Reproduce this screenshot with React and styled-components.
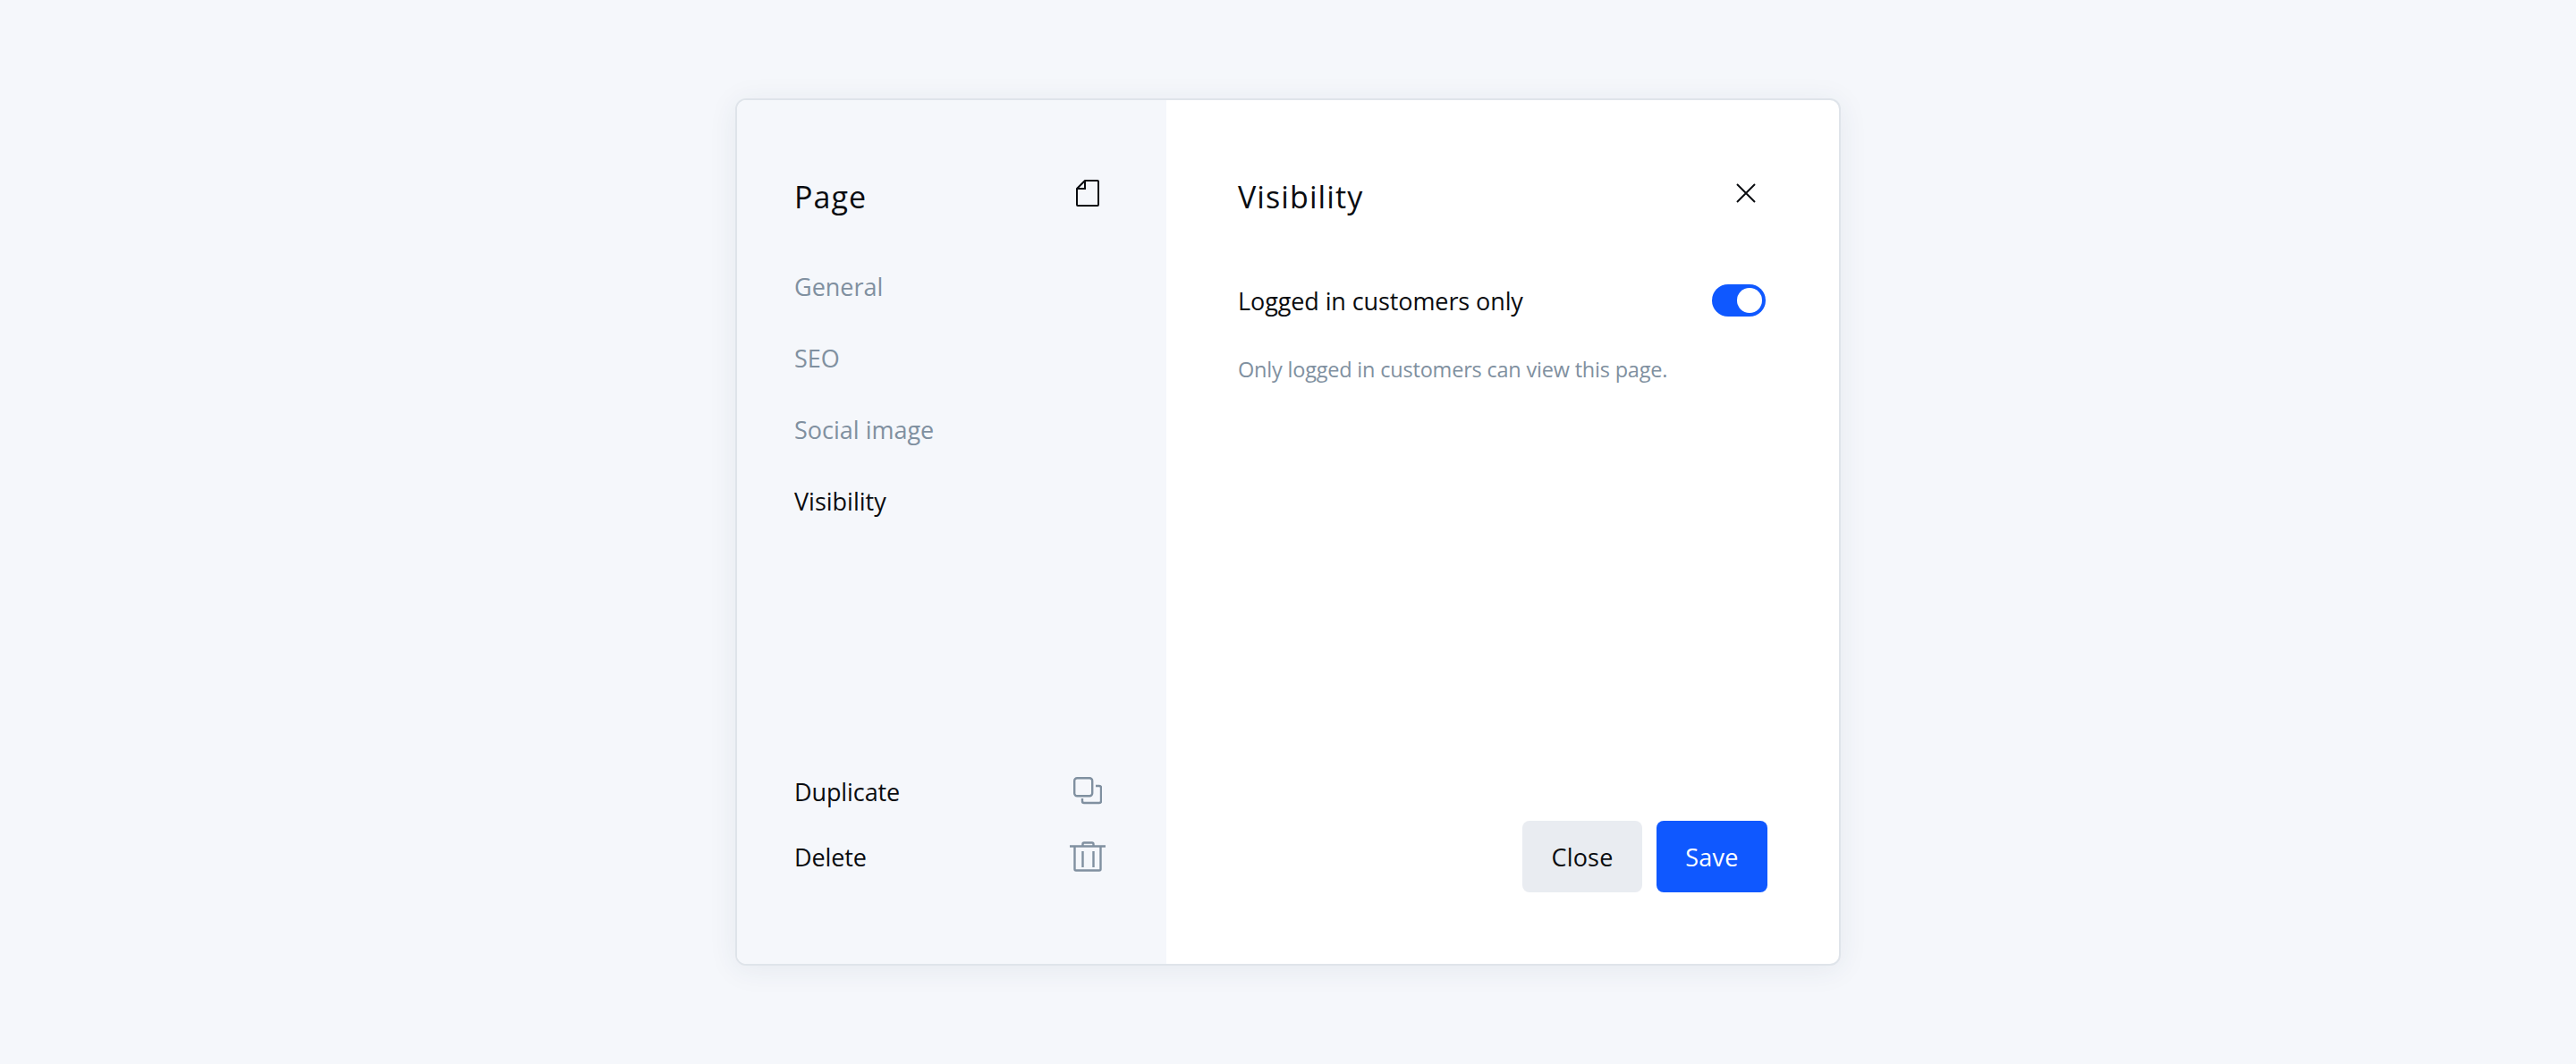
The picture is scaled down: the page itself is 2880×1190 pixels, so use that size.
import React from 'react'
import styled, { createGlobalStyle } from 'styled-components'

const GlobalStyle = createGlobalStyle`
  html, body {
    margin: 0;
    height: 100%;
    background: #f5f7fb;
  }
  #root {
    height: 100%;
  }
`

const Page = styled.div`
  height: 1190px;
  display: flex;
  align-items: center;
  justify-content: center;
  font-family: "Open Sans", sans-serif;
  color: #0a0c10;
`

const Card = styled.div`
  width: 1236px;
  height: 970px;
  box-sizing: border-box;
  display: flex;
  background: #fff;
  border: 2px solid #dfe4ea;
  border-radius: 12px;
  overflow: hidden;
  box-shadow: 0 4px 32px rgba(40, 60, 90, 0.08);
`

const Sidebar = styled.aside`
  width: 480px;
  box-sizing: border-box;
  display: flex;
  flex-direction: column;
  padding: 88px 68px 83px 64px;
  background: #f5f7fb;
`

const Main = styled.main`
  flex: 1;
  display: flex;
  flex-direction: column;
  padding: 88px 80px 80px;
`

const Header = styled.div`
  height: 40px;
  display: flex;
  justify-content: space-between;
  align-items: center;
`

const Title = styled.h2`
  margin: 0;
  font-size: 34px;
  font-weight: 500;
  line-height: 40px;
  letter-spacing: 1.1px;
`

const IconSlot = styled.span`
  width: 40px;
  height: ${(p) => p.$height || 32}px;
  display: flex;
  align-items: center;
  justify-content: center;
  align-self: flex-start;
  margin-right: ${(p) => p.$right || 0}px;
  color: ${(p) => (p.$muted ? '#8090a0' : '#0a0c10')};
`

const Nav = styled.nav`
  margin-top: 40px;
  display: flex;
  flex-direction: column;
`

const NavItem = styled.a`
  height: 80px;
  display: flex;
  align-items: center;
  font-size: 27px;
  color: ${(p) => (p.$active ? '#0a0c10' : '#8090a0')};
`

const Actions = styled.div`
  margin-top: auto;
  display: flex;
  flex-direction: column;
`

const ActionRow = styled.div`
  height: 73px;
  display: flex;
  align-items: center;
  justify-content: space-between;
  font-size: 27px;
  letter-spacing: -0.1px;
`

const SettingRow = styled.div`
  height: 40px;
  margin-top: 76px;
  display: flex;
  align-items: center;
  justify-content: space-between;
  font-size: 27px;
  letter-spacing: -0.1px;
`

const Toggle = styled.span`
  width: 60px;
  height: 36px;
  box-sizing: border-box;
  display: flex;
  justify-content: flex-end;
  padding: 4px;
  margin-right: 2px;
  background: #0f58ff;
  border-radius: 18px;
`

const Knob = styled.span`
  width: 28px;
  height: 28px;
  background: #fff;
  border-radius: 50%;
`

const Note = styled.p`
  margin: 39px 0 0;
  font-size: 23.5px;
  line-height: 36px;
  letter-spacing: -0.2px;
  color: #8090a0;
`

const Footer = styled.div`
  margin-top: auto;
  display: flex;
  justify-content: flex-end;
  gap: 16px;
`

const Button = styled.button`
  width: ${(p) => (p.$primary ? 124 : 134)}px;
  height: 80px;
  padding: 0;
  border: none;
  border-radius: 8px;
  font-family: inherit;
  font-size: 27px;
  letter-spacing: 0.2px;
  background: ${(p) => (p.$primary ? '#0f58ff' : '#e9ecf1')};
  color: ${(p) => (p.$primary ? '#fff' : '#0a0c10')};
`

const PageIcon = () => (
  <svg width="26" height="30" viewBox="0 0 26 30" fill="none" stroke="currentColor" strokeWidth="2">
    <path d="M10 1H24a1 1 0 0 1 1 1V28a1 1 0 0 1-1 1H2a1 1 0 0 1-1-1V10Z" strokeLinejoin="round" />
    <path d="M10 1V10H1" />
  </svg>
)

const CloseIcon = () => (
  <svg width="22" height="22" viewBox="0 0 22 22" fill="none" stroke="currentColor" strokeWidth="2">
    <path d="M1 1L21 21M21 1L1 21" />
  </svg>
)

const DuplicateIcon = () => (
  <svg width="32" height="31" viewBox="0 0 32 31" fill="none" stroke="currentColor" strokeWidth="2.4">
    <rect x="1.2" y="1.2" width="20" height="20" rx="3" />
    <path d="M25 10H29a2 2 0 0 1 2 2V27a2 2 0 0 1-2 2H12a2 2 0 0 1-2-2V24" />
  </svg>
)

const TrashIcon = () => (
  <svg width="40" height="34" viewBox="0 0 40 34" fill="none" stroke="currentColor" strokeWidth="2.4">
    <path d="M0 5.5H40" />
    <path d="M5.5 5.5V31a1.5 1.5 0 0 0 1.5 1.5H33a1.5 1.5 0 0 0 1.5-1.5V5.5" />
    <path d="M14.5 5.5V3a1.5 1.5 0 0 1 1.5-1.5H25a1.5 1.5 0 0 1 1.5 1.5V5.5" />
    <path d="M14.5 11V29M26.5 11V29" />
  </svg>
)

export default function App() {
  return (
    <Page>
      <GlobalStyle />
      <Card>
        <Sidebar>
          <Header>
            <Title>Page</Title>
            <IconSlot>
              <PageIcon />
            </IconSlot>
          </Header>
          <Nav>
            <NavItem>General</NavItem>
            <NavItem>SEO</NavItem>
            <NavItem>Social image</NavItem>
            <NavItem $active>Visibility</NavItem>
          </Nav>
          <Actions>
            <ActionRow>
              Duplicate
              <IconSlot $muted $height={70}>
                <DuplicateIcon />
              </IconSlot>
            </ActionRow>
            <ActionRow>
              Delete
              <IconSlot $muted $height={72}>
                <TrashIcon />
              </IconSlot>
            </ActionRow>
          </Actions>
        </Sidebar>
        <Main>
          <Header>
            <Title>Visibility</Title>
            <IconSlot $right={4}>
              <CloseIcon />
            </IconSlot>
          </Header>
          <SettingRow>
            Logged in customers only
            <Toggle>
              <Knob />
            </Toggle>
          </SettingRow>
          <Note>Only logged in customers can view this page.</Note>
          <Footer>
            <Button>Close</Button>
            <Button $primary>Save</Button>
          </Footer>
        </Main>
      </Card>
    </Page>
  )
}
